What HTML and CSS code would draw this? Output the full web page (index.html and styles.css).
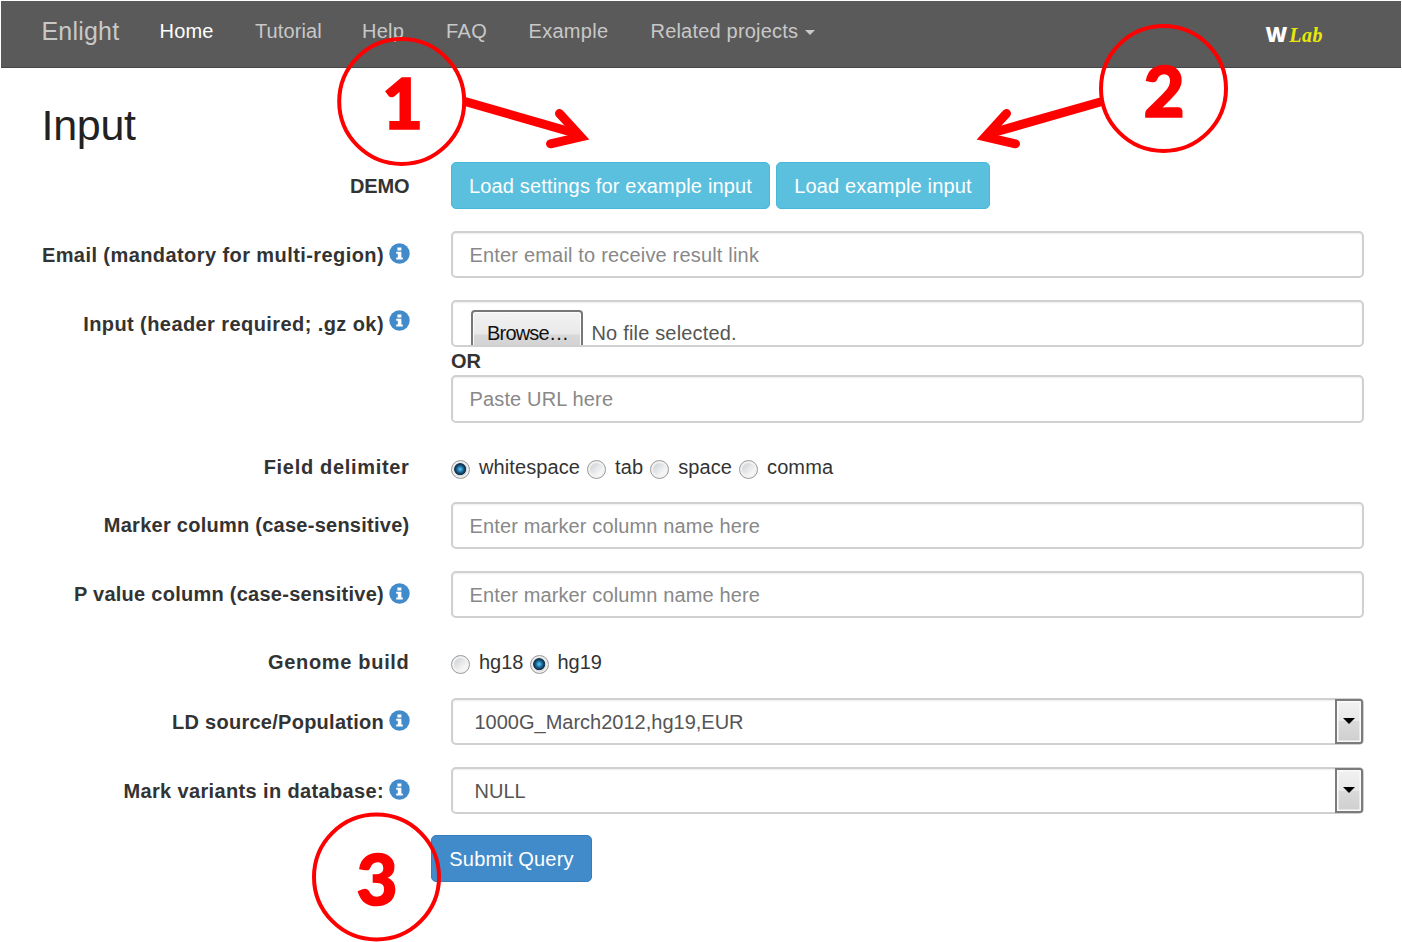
FILE: index.html
```
<!DOCTYPE html>
<html lang="en">
<head>
<meta charset="utf-8">
<title>Enlight</title>
<link rel="stylesheet" href="styles.css">
</head>
<body>
<svg class="sprite" aria-hidden="true">
  <symbol id="info" viewBox="0 0 21 21">
    <circle cx="10.5" cy="10.5" r="10.2" fill="#428bca"/>
    <path fill="#fff" d="M8.4 4.4h4v3h-4zM7.2 8.8h5.2v5.6h1.4v2H7.2v-2h1.6v-3.6H7.2z"/>
  </symbol>
</svg>
<nav class="navbar">
  <a class="brand">Enlight</a>
  <a class="nav-link active">Home</a>
  <a class="nav-link tutorial">Tutorial</a>
  <a class="nav-link help">Help</a>
  <a class="nav-link faq">FAQ</a>
  <a class="nav-link example">Example</a>
  <a class="nav-link related">Related projects <span class="caret"></span></a>
  <div class="logo"><span class="logo-w">W</span><span class="logo-lab">Lab</span></div>
</nav>
<main>
  <h1>Input</h1>
  <form>
    <div class="row">
      <div class="label tight">DEMO</div>
      <div class="buttons"><button type="button" class="btn settings">Load settings for example input</button><button type="button" class="btn load">Load example input</button></div>
    </div>
    <div class="row">
      <div class="label">Email (mandatory for multi-region)<svg class="info"><use href="#info"/></svg></div>
      <div class="control email">Enter email to receive result link</div>
    </div>
    <div class="row">
      <div class="label">Input (header required; .gz ok)<svg class="info raised"><use href="#info"/></svg></div>
      <div class="stack">
        <div class="control file"><span class="browse">Browse…</span><span class="filename">No file selected.</span></div>
        <div class="or">OR</div>
        <div class="control url">Paste URL here</div>
      </div>
    </div>
    <div class="row radios">
      <div class="label wide">Field delimiter</div>
      <div class="options">
        <span class="option"><i class="radio checked"></i>whitespace</span>
        <span class="option"><i class="radio"></i>tab</span>
        <span class="option"><i class="radio"></i>space</span>
        <span class="option"><i class="radio"></i>comma</span>
      </div>
    </div>
    <div class="row">
      <div class="label narrow column">Marker column (case-sensitive)</div>
      <div class="control marker">Enter marker column name here</div>
    </div>
    <div class="row">
      <div class="label narrow column">P value column (case-sensitive)<svg class="info"><use href="#info"/></svg></div>
      <div class="control marker">Enter marker column name here</div>
    </div>
    <div class="row radios genome">
      <div class="label wide">Genome build</div>
      <div class="options build">
        <span class="option"><i class="radio"></i>hg18</span>
        <span class="option"><i class="radio checked"></i>hg19</span>
      </div>
    </div>
    <div class="row">
      <div class="label narrow">LD source/Population<svg class="info"><use href="#info"/></svg></div>
      <div class="control select">1000G_March2012,hg19,EUR<span class="drop"></span></div>
    </div>
    <div class="row last">
      <div class="label medium">Mark variants in database:<svg class="info"><use href="#info"/></svg></div>
      <div class="control select">NULL<span class="drop"></span></div>
    </div>
    <button type="button" class="btn submit">Submit Query</button>
  </form>
</main>
<svg class="annotations" viewBox="0 0 1402 942">
  <g fill="none" stroke="#f00" stroke-width="4">
    <circle cx="401.7" cy="101.5" r="62.5"/>
    <circle cx="1163.5" cy="88.5" r="62.5"/>
    <circle cx="376.5" cy="877" r="62.5"/>
  </g>
  <g fill="none" stroke="#f00" stroke-width="9">
    <path d="M465 101.5L578 134"/>
    <path d="M1102 101.5L988 134"/>
    <g stroke-linecap="round">
      <path d="M559.5 113.5L580.8 136.8L550.5 143.8"/>
      <path d="M1006.5 113.5L985.2 136.8L1015.5 143.8"/>
    </g>
  </g>
  <g class="digits">
    <text x="402.5" y="129">1</text>
    <text x="1164" y="117">2</text>
    <text x="377" y="904.5">3</text>
  </g>
</svg>
</body>
</html>
```
FILE: styles.css
```
* { box-sizing: border-box; }
body {
  margin: 0;
  position: relative;
  height: 942px;
  overflow: hidden;
  background: #fff;
  color: #333;
  font: 20px/28px "Liberation Sans", Arial, sans-serif;
  letter-spacing: 0.25px;
}
.sprite { display: none; }

.navbar {
  display: flex;
  margin: 1px 1px 0;
  height: 67px;
  padding: 16px 0 0 40.5px;
  background: #5a5a5a;
  border-bottom: 1px solid #464646;
  color: #c8c8c8;
  white-space: nowrap;
}
.brand { width: 118px; font-size: 25px; letter-spacing: 0.2px; }
.nav-link { width: 95.5px; }
.active { color: #fff; letter-spacing: 0.2px; }
.tutorial { width: 107px; letter-spacing: 0.1px; }
.help { width: 84px; }
.faq { width: 82.5px; letter-spacing: 0.4px; }
.example { width: 122px; letter-spacing: 0.3px; }
.related { width: 615px; letter-spacing: 0.2px; }
.caret {
  display: inline-block;
  margin-left: 1px;
  vertical-align: 3px;
  border: 5px solid transparent;
  border-top-color: #c8c8c8;
  border-bottom: 0;
}
.logo { display: flex; align-items: baseline; gap: 2px; padding-top: 3px; }
.logo-w { color: #fff; font: 800 21px/28px "Open Sans", sans-serif; letter-spacing: 0; }
.logo-lab { color: #e8e80c; font: italic bold 20px/28px "Liberation Serif", serif; letter-spacing: 0.5px; }

h1 {
  margin: 31px 0 11px 41.5px;
  height: 52px;
  color: #222;
  font-size: 43px;
  font-weight: 400;
  line-height: 52px;
  letter-spacing: -0.3px;
}
.row { display: flex; gap: 41.5px; margin-bottom: 22px; }
.label {
  display: flex;
  justify-content: flex-end;
  flex: none;
  width: 409.5px;
  height: 47px;
  font-weight: 700;
  line-height: 48px;
  letter-spacing: 0.42px;
  white-space: nowrap;
}
.tight { letter-spacing: -0.1px; }
.narrow { letter-spacing: 0.26px; }
.medium { letter-spacing: 0.36px; }
.wide { letter-spacing: 0.68px; }
.column { line-height: 47px; }
.info { flex: none; width: 21px; height: 21px; margin: 12px 0 0 4.5px; }
.raised { margin-top: 10px; }

.buttons { display: flex; gap: 6px; }
.btn {
  height: 47px;
  padding: 1px 0 0;
  border: 1px solid #46b8da;
  border-radius: 5px;
  background: #5bc0de;
  color: #fff;
  font: inherit;
  letter-spacing: 0.17px;
  white-space: nowrap;
}
.settings { width: 319px; }
.load { width: 214px; }
.control {
  display: flex;
  align-items: center;
  width: 912.5px;
  height: 47px;
  padding: 1px 0 0 16.5px;
  border: 2px solid #d0d0d0;
  border-radius: 5px;
  box-shadow: inset 0 1px 2px rgba(0, 0, 0, 0.07);
  color: #888;
  white-space: nowrap;
}
.email { letter-spacing: 0.18px; }
.marker { padding-top: 0; letter-spacing: 0.13px; }
.stack { height: 123px; }
.file { align-items: flex-start; padding: 8px 0 0 18px; overflow: hidden; color: #555; }
.browse {
  width: 111.5px;
  height: 48px;
  margin-right: 9px;
  padding: 7px 0 0 14px;
  border: 2px solid #777;
  border-radius: 4px;
  box-shadow: inset 0 0 0 1px #fcfcfc;
  background: linear-gradient(#f2f2f2 0, #e9e9e9 22px, #d8d8d8 23px, #cecece 100%);
  color: #111;
  letter-spacing: -0.8px;
}
.filename { padding-top: 9px; letter-spacing: 0.18px; }
.or { height: 28px; font-weight: 700; letter-spacing: 0; }
.url { height: 48px; padding-top: 0; letter-spacing: 0.15px; }

.radios .label, .options { line-height: 45px; height: 45px; }
.radios { margin-bottom: 12px; }
.radios.genome { margin-bottom: 13px; }
.row.last { margin-bottom: 21px; }
.options { display: flex; gap: 7px; }
.build { gap: 6px; }
.option { display: flex; letter-spacing: 0.1px; }
.build .option { letter-spacing: 0; }
.radio {
  flex: none;
  width: 19px;
  height: 19px;
  margin: 15px 9px 0 0;
  border: 1.5px solid #999;
  border-radius: 50%;
  background: linear-gradient(135deg, #c4c8cc, #f8f8f8 75%);
  background-clip: padding-box;
  box-shadow: inset 0 0 0 2px #f2f2f2;
}
.checked {
  background: radial-gradient(circle at 48% 48%, #6fc8ee 0, #2a8fc4 2px, #123f63 4.5px, #16324a 5.6px, #ddd 6.4px);
  box-shadow: inset 0 0 0 1.5px #f0f0f0;
}
.select { position: relative; padding-left: 21.5px; color: #555; letter-spacing: 0; }
.drop {
  position: absolute;
  top: -1px;
  right: -1px;
  width: 28px;
  height: 45px;
  border: 2px solid #7b7b7b;
  border-radius: 0 3px 3px 0;
  box-shadow: inset 0 0 0 1.5px #fafafa;
  background: linear-gradient(#f1f1f1 0, #e8e8e8 50%, #dadada 50%, #cfcfcf 100%);
}
.drop::after {
  content: "";
  position: absolute;
  top: 17px;
  left: 6px;
  border: 6px solid transparent;
  border-top-color: #000;
  border-bottom: 0;
}
.submit { display: block; width: 161px; margin-left: 431px; border-color: #357ebd; background: #428bca; }

.annotations { position: absolute; inset: 0; width: 1402px; height: 942px; pointer-events: none; }
.digits { fill: #f00; stroke: #f00; stroke-width: 1.6px; font: 900 71px Lato, sans-serif; letter-spacing: 0; text-anchor: middle; }
```
